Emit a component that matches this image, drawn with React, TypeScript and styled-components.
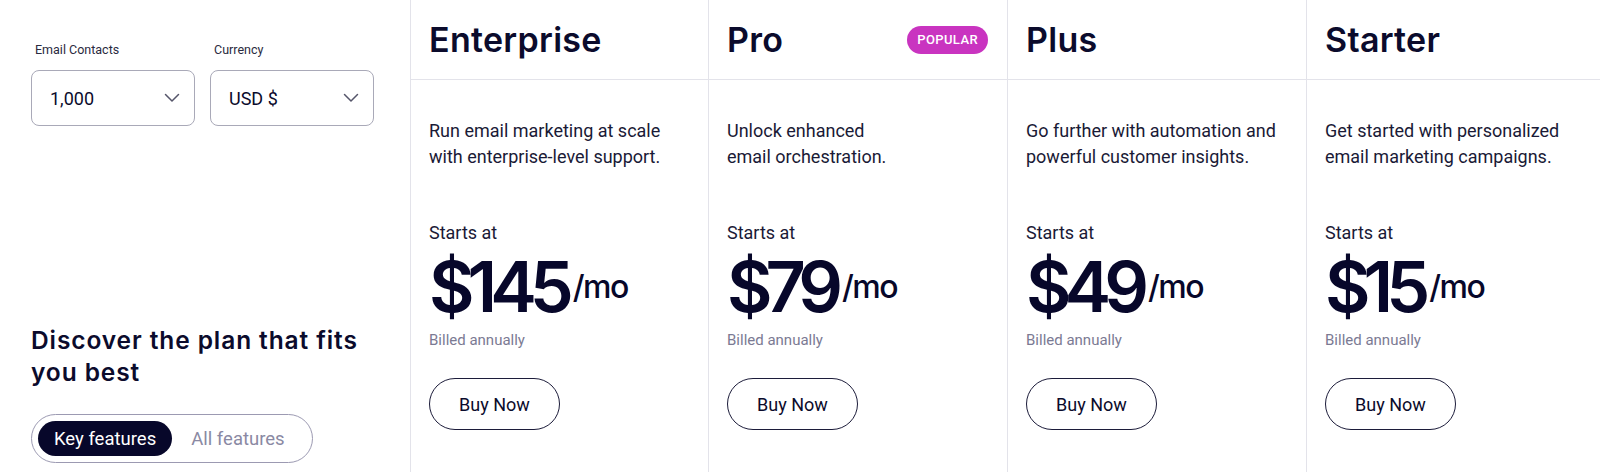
import React from 'react';
import styled, { createGlobalStyle } from 'styled-components';

const GlobalStyle = createGlobalStyle`
  html, body {
    margin: 0;
    padding: 0;
    background: #fff;
  }
  body {
    font-family: Roboto, 'Liberation Sans', sans-serif;
    color: #0b0b2c;
  }
`;

const Page = styled.div`
  display: grid;
  grid-template-columns: 410px 298px 299px 299px 299px;
  height: 472px;
  width: 1600px;
  overflow: hidden;
`;

const Sidebar = styled.div`
  display: flex;
  flex-direction: column;
  padding: 42px 0 9px 31px;
  box-sizing: border-box;
`;

const Filters = styled.div`
  display: flex;
  gap: 15px;
`;

const Field = styled.div`
  display: flex;
  flex-direction: column;
  gap: 13px;
`;

const Label = styled.label`
  font-size: 12.5px;
  color: #2a2a40;
  padding-left: 4px;
`;

const SelectBox = styled.div`
  width: 164px;
  height: 56px;
  box-sizing: border-box;
  border: 1px solid #a9a9b8;
  border-radius: 8px;
  display: flex;
  align-items: center;
  justify-content: space-between;
  padding: 0 14px 0 18px;
  font-size: 18px;
  color: #0b0b2c;
`;

const Chevron = () => (
  <svg width="16" height="10" viewBox="0 0 16 10" fill="none">
    <path d="M1.5 1.5 L8 8 L14.5 1.5" stroke="#55556a" strokeWidth="1.5" strokeLinecap="round" strokeLinejoin="round" />
  </svg>
);

const Bottom = styled.div`
  margin-top: auto;
  display: flex;
  flex-direction: column;
  gap: 26px;
`;

const Heading = styled.h2`
  margin: 0;
  font-family: Inter, 'Liberation Sans', sans-serif;
  font-weight: 600;
  font-size: 24.5px;
  letter-spacing: 0.9px;
  line-height: 32px;
  width: 350px;
  color: #0b0b2c;
`;

const Toggle = styled.div`
  width: 282px;
  height: 49px;
  box-sizing: border-box;
  border: 1px solid #9c9ab2;
  border-radius: 25px;
  display: flex;
  align-items: center;
  padding: 0 6px;
  gap: 15px;
`;

const ToggleOption = styled.div<{ $active?: boolean }>`
  height: 35px;
  display: flex;
  align-items: center;
  padding: 0 ${(p) => (p.$active ? '16px' : '4px')};
  border-radius: 18px;
  font-size: 18.5px;
  background: ${(p) => (p.$active ? '#07072a' : 'transparent')};
  color: ${(p) => (p.$active ? '#fff' : '#8a89a3')};
`;

const Column = styled.div`
  border-left: 1px solid #e3e3ea;
  display: flex;
  flex-direction: column;
`;

const ColumnHeader = styled.div`
  height: 80px;
  box-sizing: border-box;
  border-bottom: 1px solid #e3e3ea;
  display: flex;
  align-items: center;
  justify-content: space-between;
  padding: 0 19px 0 18px;
`;

const PlanName = styled.h3`
  margin: 0;
  font-family: Inter, 'Liberation Sans', sans-serif;
  font-weight: 600;
  font-size: 34px;
  letter-spacing: 0.3px;
  color: #0b0b2c;
`;

const Badge = styled.span`
  background: #c934c0;
  color: #fff;
  font-size: 13px;
  font-weight: 500;
  letter-spacing: 0.4px;
  height: 28px;
  padding: 0 10px;
  border-radius: 14px;
  display: flex;
  align-items: center;
`;

const ColumnBody = styled.div`
  padding: 38px 18px 0 18px;
  display: flex;
  flex-direction: column;
  align-items: flex-start;
`;

const Description = styled.p`
  margin: 0;
  font-size: 18px;
  line-height: 26px;
  color: #1a1a36;
  height: 52px;
`;

const StartsAt = styled.div`
  margin-top: 50px;
  font-size: 18px;
  line-height: 26px;
  color: #1a1a36;
`;

const PriceRow = styled.div`
  display: flex;
  align-items: flex-start;
  margin-top: 6px;
  height: 70px;
`;

const Price = styled.span`
  font-family: Inter, 'Liberation Sans', sans-serif;
  font-weight: 600;
  font-size: 70px;
  line-height: 70px;
  letter-spacing: -7px;
  color: #07072a;
`;

const PerMonth = styled.span`
  font-family: Inter, 'Liberation Sans', sans-serif;
  font-weight: 500;
  font-size: 32px;
  line-height: 33px;
  letter-spacing: -1.5px;
  margin: 18px 0 0 6px;
  color: #07072a;
`;

const Billed = styled.div`
  margin-top: 8px;
  font-size: 15px;
  line-height: 20px;
  color: #7b7a93;
`;

const BuyButton = styled.button`
  margin-top: 28px;
  width: 131px;
  height: 52px;
  border: 1px solid #1c1c3a;
  border-radius: 26px;
  background: #fff;
  font-family: Roboto, 'Liberation Sans', sans-serif;
  font-size: 18px;
  color: #0b0b2c;
  cursor: pointer;
`;

interface Plan {
  name: string;
  description: string[];
  price: string;
  popular?: boolean;
}

const plans: Plan[] = [
  { name: 'Enterprise', description: ['Run email marketing at scale', 'with enterprise-level support.'], price: '$145' },
  { name: 'Pro', description: ['Unlock enhanced', 'email orchestration.'], price: '$79', popular: true },
  { name: 'Plus', description: ['Go further with automation and', 'powerful customer insights.'], price: '$49' },
  { name: 'Starter', description: ['Get started with personalized', 'email marketing campaigns.'], price: '$15' },
];

const PlanColumn: React.FC<{ plan: Plan }> = ({ plan }) => (
  <Column>
    <ColumnHeader>
      <PlanName>{plan.name}</PlanName>
      {plan.popular && <Badge>POPULAR</Badge>}
    </ColumnHeader>
    <ColumnBody>
      <Description>
        {plan.description[0]}
        <br />
        {plan.description[1]}
      </Description>
      <StartsAt>Starts at</StartsAt>
      <PriceRow>
        <Price>{plan.price}</Price>
        <PerMonth>/mo</PerMonth>
      </PriceRow>
      <Billed>Billed annually</Billed>
      <BuyButton>Buy Now</BuyButton>
    </ColumnBody>
  </Column>
);

export default function App() {
  return (
    <>
      <GlobalStyle />
      <Page>
        <Sidebar>
          <Filters>
            <Field>
              <Label>Email Contacts</Label>
              <SelectBox>
                1,000
                <Chevron />
              </SelectBox>
            </Field>
            <Field>
              <Label>Currency</Label>
              <SelectBox>
                USD $
                <Chevron />
              </SelectBox>
            </Field>
          </Filters>
          <Bottom>
            <Heading>Discover the plan that fits you best</Heading>
            <Toggle>
              <ToggleOption $active>Key features</ToggleOption>
              <ToggleOption>All features</ToggleOption>
            </Toggle>
          </Bottom>
        </Sidebar>
        {plans.map((p) => (
          <PlanColumn key={p.name} plan={p} />
        ))}
      </Page>
    </>
  );
}
